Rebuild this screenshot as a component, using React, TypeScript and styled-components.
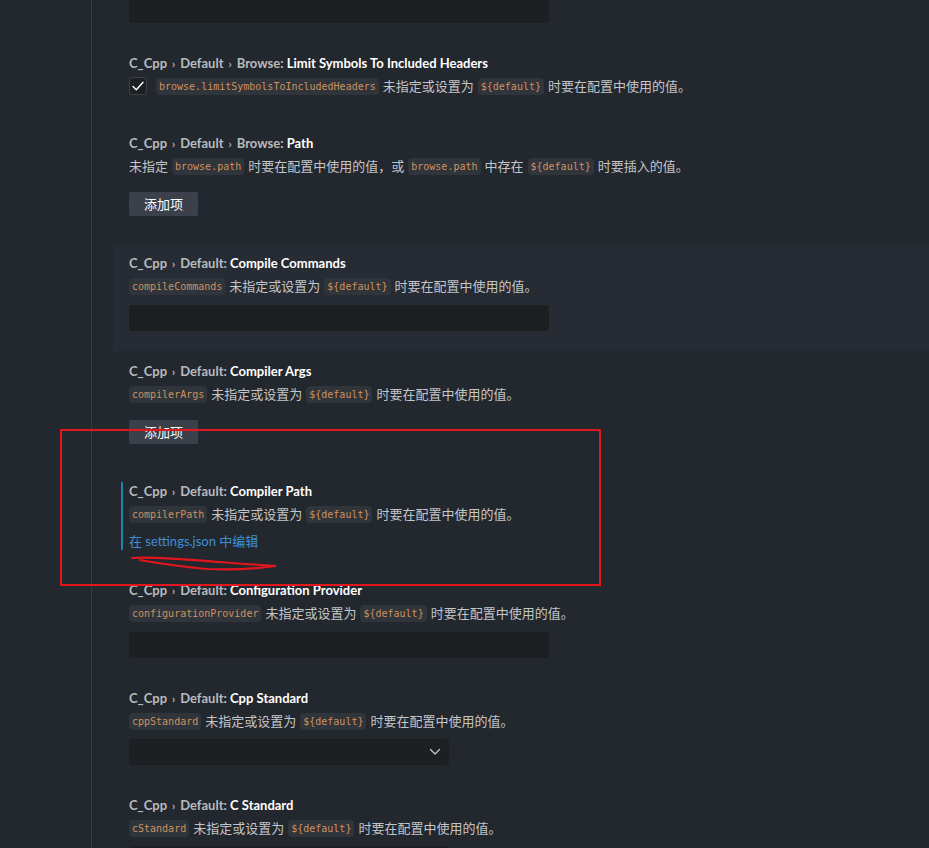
import React from "react";
import styled, { createGlobalStyle, css } from "styled-components";

const Global = createGlobalStyle`
  html, body { margin: 0; padding: 0; background: #23272e; }
  body { overflow: hidden; font-family: Lato, "Noto Sans CJK SC", sans-serif; }
  #root { height: 848px; }
`;

const Page = styled.div`
  position: relative;
  display: flex;
  height: 848px;
  overflow: hidden;
  background: #23272e;
`;

const Gutter = styled.div`
  width: 91px;
  flex: none;
  border-right: 1px solid #363b45;
`;

const List = styled.div`
  flex: 1;
  display: flex;
  flex-direction: column;
  padding-left: 21px;
  margin-top: -3px;
`;

type Kind = "tail" | "input" | "check" | "button" | "link" | "select";

const Item = styled.div<{ $kind: Kind; $hover?: boolean }>`
  padding: 11px 0 20px 8px;
  background: ${(p) => (p.$hover ? "#272b33" : "transparent")};
  ${(p) => p.$kind === "tail" && css`padding-top: 0;`}
  ${(p) => p.$kind === "check" && css`padding-bottom: 28px;`}
  ${(p) => p.$kind === "button" && css`padding-bottom: 27px;`}
`;

const Content = styled.div<{ $modified?: boolean }>`
  border-left: 2px solid ${(p) => (p.$modified ? "#1a85a6" : "transparent")};
  padding-left: 6px;
`;

const Title = styled.div`
  font-family: Lato, "Noto Sans CJK SC", sans-serif;
  font-size: 13px;
  line-height: 18px;
  height: 18px;
  font-weight: 700;
  color: #ffffff;
  white-space: nowrap;
`;

const Category = styled.span`
  color: #b9bbbe;
`;

const Sep = styled.span`
  color: #b9bbbe;
  font-size: 11px;
  margin: 0 5px;
`;

const Desc = styled.div`
  margin-top: 5px;
  font-family: "Noto Sans CJK SC", sans-serif;
  font-size: 13px;
  line-height: 18px;
  color: #c3c5c8;
  white-space: nowrap;
  display: flex;
  align-items: center;
`;

const Code = styled.code`
  font-family: "DejaVu Sans Mono", "Liberation Mono", monospace;
  font-size: 10px;
  line-height: 16px;
  color: #cc9260;
  background: #30343b;
  border-radius: 4px;
  padding: 1px 3px 0;
  margin: 1px 4px 0 0;
`;

const CodeMid = styled(Code)`
  margin: 1px 4px 0;
`;

const Input = styled.div<{ $flush?: boolean }>`
  margin-top: ${(p) => (p.$flush ? 0 : 10)}px;
  width: 420px;
  height: 26px;
  background: #1e1f23;
  border-radius: 3px;
`;

const Select = styled.div`
  margin-top: 9px;
  width: 320px;
  height: 26px;
  background: #1e1f23;
  border-radius: 3px;
  display: flex;
  align-items: center;
  justify-content: flex-end;
  padding-right: 8px;
  box-sizing: border-box;
`;

const AddButton = styled.button`
  margin-top: 17px;
  height: 24px;
  padding: 0 15px;
  border: none;
  border-radius: 2px;
  background: #3b404b;
  color: #ffffff;
  font-family: "Noto Sans CJK SC", sans-serif;
  font-size: 13px;
  line-height: 24px;
  display: block;
`;

const CheckBox = styled.span`
  width: 18px;
  height: 18px;
  box-sizing: border-box;
  border: 1px solid #3c4048;
  background: #1e1f23;
  border-radius: 3px;
  display: inline-flex;
  align-items: center;
  justify-content: center;
  margin-right: 9px;
  flex: none;
`;

const Link = styled.a`
  display: block;
  margin-top: 9px;
  font-size: 13px;
  line-height: 18px;
  color: #3f8fd6;
  text-decoration: none;
  font-family: Lato, "Noto Sans CJK SC", sans-serif;
`;

const Annotation = styled.div`
  position: absolute;
  left: 60px;
  top: 429px;
  width: 541px;
  height: 157px;
  box-sizing: border-box;
  border: 2px solid #e3161e;
  pointer-events: none;
`;

const Scribble = styled.svg`
  position: absolute;
  left: 128px;
  top: 552px;
  pointer-events: none;
`;

const T = ({ cat, label }: { cat: string[]; label: string }) => (
  <Title>
    {cat.map((c, i) => (
      <React.Fragment key={i}>
        <Category>{c}</Category>
        {i < cat.length - 1 ? <Sep>›</Sep> : <Category>: </Category>}
      </React.Fragment>
    ))}
    {label}
  </Title>
);

const StdDesc = ({ name }: { name: string }) => (
  <Desc>
    <Code>{name}</Code>
    未指定或设置为
    <CodeMid>{"${default}"}</CodeMid>
    时要在配置中使用的值。
  </Desc>
);

const Chevron = () => (
  <svg width="12" height="8" viewBox="0 0 12 8" fill="none">
    <path d="M1.5 1.5 L6 6 L10.5 1.5" stroke="#c5c7ca" strokeWidth="1.3" strokeLinecap="round" strokeLinejoin="round" />
  </svg>
);

const Check = () => (
  <svg width="14" height="14" viewBox="0 0 14 14" fill="none">
    <path d="M2 7.5 L5.3 10.8 L12 3.2" stroke="#ffffff" strokeWidth="1.4" strokeLinecap="round" strokeLinejoin="round" />
  </svg>
);

export default function App() {
  const base = ["C_Cpp", "Default"];
  const browse = ["C_Cpp", "Default", "Browse"];
  return (
    <Page>
      <Global />
      <Gutter />
      <List>
        <Item $kind="tail">
          <Content>
            <Input $flush />
          </Content>
        </Item>
        <Item $kind="check">
          <Content>
            <T cat={browse} label="Limit Symbols To Included Headers" />
            <Desc>
              <CheckBox>
                <Check />
              </CheckBox>
              <Code>browse.limitSymbolsToIncludedHeaders</Code>
              未指定或设置为
              <CodeMid>{"${default}"}</CodeMid>
              时要在配置中使用的值。
            </Desc>
          </Content>
        </Item>
        <Item $kind="button">
          <Content>
            <T cat={browse} label="Path" />
            <Desc>
              未指定
              <CodeMid>browse.path</CodeMid>
              时要在配置中使用的值，或
              <CodeMid>browse.path</CodeMid>
              中存在
              <CodeMid>{"${default}"}</CodeMid>
              时要插入的值。
            </Desc>
            <AddButton>添加项</AddButton>
          </Content>
        </Item>
        <Item $kind="input" $hover>
          <Content>
            <T cat={base} label="Compile Commands" />
            <StdDesc name="compileCommands" />
            <Input />
          </Content>
        </Item>
        <Item $kind="button">
          <Content>
            <T cat={base} label="Compiler Args" />
            <StdDesc name="compilerArgs" />
            <AddButton>添加项</AddButton>
          </Content>
        </Item>
        <Item $kind="link">
          <Content $modified>
            <T cat={base} label="Compiler Path" />
            <StdDesc name="compilerPath" />
            <Link href="#">在 settings.json 中编辑</Link>
          </Content>
        </Item>
        <Item $kind="input">
          <Content>
            <T cat={base} label="Configuration Provider" />
            <StdDesc name="configurationProvider" />
            <Input />
          </Content>
        </Item>
        <Item $kind="select">
          <Content>
            <T cat={base} label="Cpp Standard" />
            <StdDesc name="cppStandard" />
            <Select>
              <Chevron />
            </Select>
          </Content>
        </Item>
        <Item $kind="select">
          <Content>
            <T cat={base} label="C Standard" />
            <StdDesc name="cStandard" />
            <Select>
              <Chevron />
            </Select>
          </Content>
        </Item>
      </List>
      <Annotation />
      <Scribble width="160" height="24" viewBox="0 0 160 24" fill="none">
        <path
          d="M4 6 C 30 4, 60 8, 90 10 C 115 12, 135 13, 148 14 C 125 17, 100 18, 80 17 C 55 15, 30 11, 12 8"
          stroke="#e3161e"
          strokeWidth="2.2"
          strokeLinecap="round"
          fill="none"
        />
      </Scribble>
    </Page>
  );
}
